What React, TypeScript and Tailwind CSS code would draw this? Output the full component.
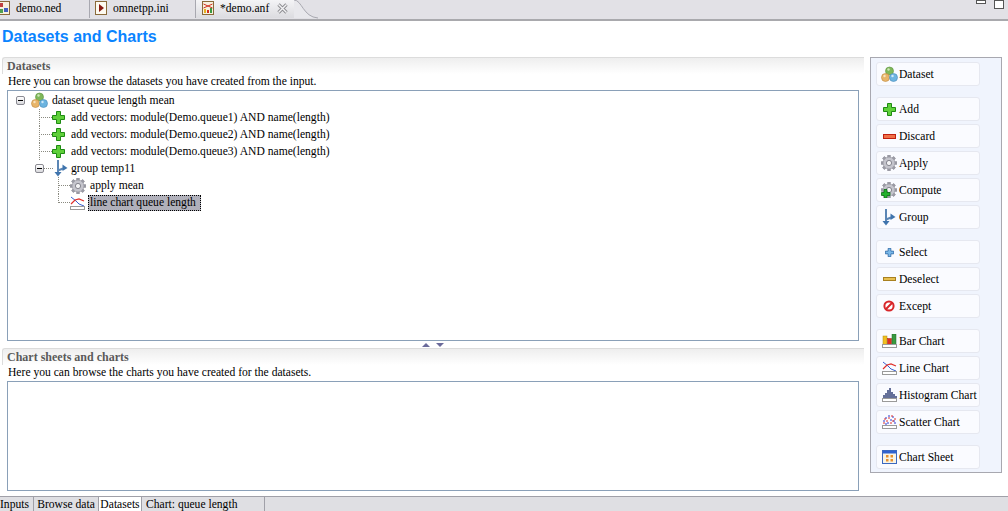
import type { ReactNode } from 'react'

function DatasetIcon() {
  return (
    <svg width="17" height="17" viewBox="0 0 17 17">
      <circle cx="8.5" cy="5" r="4" fill="#7fb85a" stroke="#5d9440" strokeWidth="0.6" />
      <circle cx="4.5" cy="11.5" r="4" fill="#e8b56a" stroke="#c08a3e" strokeWidth="0.6" />
      <circle cx="12.5" cy="11.5" r="4" fill="#6cb4e0" stroke="#4a8cb8" strokeWidth="0.6" />
      <circle cx="7.5" cy="3.5" r="1.2" fill="#cfe8b8" />
      <circle cx="11.5" cy="10" r="1.2" fill="#cfe8f8" />
      <circle cx="3.5" cy="10" r="1.2" fill="#f8e4c0" />
    </svg>
  )
}

function PlusIcon({ fill = '#5fd03a', stroke = '#1e8a12', size = 13 }: { fill?: string; stroke?: string; size?: number }) {
  return (
    <svg width={size} height={size} viewBox="0 0 13 13">
      <path d="M4.5 .5h4v4h4v4h-4v4h-4v-4h-4v-4h4z" fill={fill} stroke={stroke} />
    </svg>
  )
}

function MinusIcon({ fill, stroke, h = 5 }: { fill: string; stroke: string; h?: number }) {
  return (
    <svg width="13" height={h} viewBox={`0 0 13 ${h}`}>
      <rect x=".5" y=".5" width="12" height={h - 1} fill={fill} stroke={stroke} />
    </svg>
  )
}

function GearIcon({ plus }: { plus?: boolean }) {
  const teeth = [0, 45, 90, 135, 180, 225, 270, 315]
  return (
    <svg width="16" height="16" viewBox="0 0 16 16">
      {teeth.map((a) => (
        <rect key={a} x="6.5" y="0" width="3" height="16" fill="#9a9aa4" transform={`rotate(${a} 8 8)`} />
      ))}
      <circle cx="8" cy="8" r="6" fill="#c4c4cc" stroke="#8f8f98" strokeWidth="0.6" />
      <circle cx="8" cy="8" r="2.6" fill="#f4f4f6" stroke="#6f6f78" strokeWidth="0.8" />
      {plus && <path d="M3 7.5h3v3h3v3H6v2.500H3V13.500H.5v-3H3z" fill="#22b02c" stroke="#0c6a14" strokeWidth="0.8" />}
    </svg>
  )
}

function GroupIcon() {
  return (
    <svg width="14" height="17" viewBox="0 0 14 17">
      <path d="M4 0v13" stroke="#5b86b5" strokeWidth="2" fill="none" />
      <path d="M.5 12l3.500 4.500 3.500-4.500z" fill="#3f74ad" />
      <path d="M4 10.500l5-2" stroke="#5b86b5" strokeWidth="2" fill="none" />
      <path d="M8.500 4.500l5 3.500-5 3z" fill="#3f74ad" />
    </svg>
  )
}

function ChartBase({ children }: { children: ReactNode }) {
  return (
    <svg width="15" height="14" viewBox="0 0 15 14">
      {children}
      <rect x=".5" y="10.5" width="14" height="3" fill="#fff" stroke="#9a9a9a" />
    </svg>
  )
}

function LineChartIcon() {
  return (
    <ChartBase>
      <path d="M1 1l5 4 3 3 5 2" stroke="#3a5fd0" fill="none" />
      <path d="M1 8l4-4 4-1 5 2" stroke="#e0302a" strokeWidth="1.2" fill="none" />
    </ChartBase>
  )
}

function BarChartIcon() {
  return (
    <ChartBase>
      <rect x="1" y="2" width="4" height="8.500" fill="#f0c020" stroke="#b08a10" strokeWidth="0.5" />
      <rect x="5.500" y="4.500" width="4" height="6" fill="#e03020" stroke="#a02010" strokeWidth="0.5" />
      <rect x="10" y="0" width="4" height="10.500" fill="#3a9a40" stroke="#1e6a24" strokeWidth="0.5" />
    </ChartBase>
  )
}

function HistogramIcon() {
  return (
    <ChartBase>
      <path d="M2 11V7M4 11V5M6 11V2M8 11V0M10 11V4M12 11V6M14 11V8" stroke="#24346e" strokeWidth="1.4" />
    </ChartBase>
  )
}

function ScatterIcon() {
  return (
    <ChartBase>
      <path d="M1 6h2M3 3h2M5 8h2M6 1h2M8 5h2M10 2h2M12 8h2M3 9h2M11 6h2" stroke="#2a3ad0" />
      <path d="M2 4h2M4 6h2M6 3h2M8 8h2M9 1h2M12 4h2M1 8h2M10 6h2" stroke="#e0302a" />
    </ChartBase>
  )
}

function SheetIcon() {
  return (
    <svg width="15" height="14" viewBox="0 0 15 14">
      <rect x=".5" y=".5" width="14" height="13" fill="#f8f4e4" stroke="#3a68c0" />
      <rect x="1" y="1" width="13" height="2.500" fill="#2f62d0" />
      <path d="M4 5h2.500v2.500H4zM8.500 5H11v2.500H8.500zM4 9h2.500v2.500H4zM8.500 9H11v2.500H8.500z" fill="#e8902c" />
    </svg>
  )
}

function ExceptIcon() {
  return (
    <svg width="12" height="12" viewBox="0 0 12 12">
      <circle cx="6" cy="6" r="4.600" fill="#fff" stroke="#d8262a" strokeWidth="2" />
      <path d="M2.800 9.200l6.400-6.400" stroke="#d8262a" strokeWidth="2" />
    </svg>
  )
}

function NedIcon() {
  return (
    <svg width="12" height="14" viewBox="0 0 12 14">
      <rect x=".5" y=".5" width="11" height="13" fill="#f7f1df" stroke="#8a6a3a" />
      <rect x="1" y="2" width="4" height="4" fill="#c04040" />
      <rect x="6" y="7" width="4" height="4" fill="#4060c0" />
      <rect x="1" y="8" width="4" height="4" fill="#50a050" />
    </svg>
  )
}

function IniIcon() {
  return (
    <svg width="12" height="14" viewBox="0 0 12 14">
      <rect x=".5" y=".5" width="11" height="13" fill="#fdfaf0" stroke="#8a6a3a" />
      <path d="M4 3l5 4-5 4z" fill="#8a1a12" />
    </svg>
  )
}

function AnfIcon() {
  return (
    <svg width="12" height="14" viewBox="0 0 12 14">
      <rect x=".5" y=".5" width="11" height="13" fill="#f7f1df" stroke="#8a6a3a" />
      <rect x="2" y="8" width="2" height="4" fill="#e8b020" />
      <rect x="5" y="9" width="2" height="3" fill="#d03020" />
      <rect x="8" y="7" width="2" height="5" fill="#3a9a40" />
      <path d="M1.500 3l9 4M1.500 7l9-4" stroke="#d03020" />
    </svg>
  )
}

function CloseIcon() {
  return (
    <svg width="11" height="11" viewBox="0 0 11 11">
      <path d="M1.500 1.500l8 8M9.500 1.500l-8 8" stroke="#8c8c90" strokeWidth="3.200" />
      <path d="M1.500 1.500l8 8M9.500 1.500l-8 8" stroke="#f4f4f6" strokeWidth="1.400" />
    </svg>
  )
}

function TreeToggle() {
  return (
    <span className="flex h-[9px] w-[9px] shrink-0 items-center justify-center rounded-[2px] border border-[#8a8a92] bg-gradient-to-b from-white to-[#d8d8dc]">
      <span className="h-px w-[5px] bg-black" />
    </span>
  )
}

// one piece of dotted tree line: vertical part plus the stub going to the icon
function Elbow({ width, last }: { width: number; last?: boolean }) {
  return (
    <span className="relative h-[17px] shrink-0" style={{ width }}>
      <span className={`absolute left-0 top-0 border-l border-dotted border-[#8a8a80] ${last ? 'h-[9px]' : 'h-[17px]'}`} />
      <span className="absolute left-0 right-0 top-[8px] border-t border-dotted border-[#8a8a80]" />
    </span>
  )
}

function TreeRow({ children }: { children: ReactNode }) {
  return <div className="flex h-[17px] items-center whitespace-nowrap">{children}</div>
}

function Tree() {
  const vectors = ['queue1', 'queue2', 'queue3']
  return (
    <div className="pl-[8px] pt-[1px]">
      <TreeRow>
        <TreeToggle />
        <span className="ml-[6px] flex w-[21px] shrink-0"><DatasetIcon /></span>
        <span>dataset queue length mean</span>
      </TreeRow>
      {vectors.map((q) => (
        <TreeRow key={q}>
          <span className="w-[23px] shrink-0" />
          <Elbow width={13} />
          <span className="flex w-[19px] shrink-0"><PlusIcon /></span>
          <span>add vectors: module(Demo.{q}) AND name(length)</span>
        </TreeRow>
      ))}
      <TreeRow>
        <span className="w-[19px] shrink-0" />
        <TreeToggle />
        <span className="w-[9px] shrink-0 border-t border-dotted border-[#8a8a80]" />
        <span className="ml-[1px] flex w-[17px] shrink-0"><GroupIcon /></span>
        <span>group temp11</span>
      </TreeRow>
      <TreeRow>
        <span className="w-[42px] shrink-0" />
        <Elbow width={12} />
        <span className="flex w-[20px] shrink-0"><GearIcon /></span>
        <span>apply mean</span>
      </TreeRow>
      <TreeRow>
        <span className="w-[42px] shrink-0" />
        <Elbow width={12} last />
        <span className="flex w-[18px] shrink-0"><LineChartIcon /></span>
        <span className="border border-dotted border-black bg-[#b0b0ba] pl-px pr-[4px] leading-[14px]">line chart queue length</span>
      </TreeRow>
    </div>
  )
}

function SectionHeader({ title }: { title: string }) {
  return (
    <div className="h-[17px] rounded-tl-[3px] border-l border-t border-[#dcdcdc] bg-gradient-to-b from-[#eeeeee] to-white pl-[4px] pt-px text-[12px] font-bold leading-[15px] text-[#5a5a5a]">
      {title}
    </div>
  )
}

function ToolButton({ icon, label }: { icon: ReactNode; label: string }) {
  return (
    <div className="flex h-[24px] w-[104px] items-center whitespace-nowrap rounded-[3px] border border-[#e6e8f0] bg-[#fafbff] pl-[3px]">
      <span className="flex w-[18px] shrink-0 justify-center">{icon}</span>
      <span className="ml-px">{label}</span>
    </div>
  )
}

function Tab({ icon, label, width, active, close }: { icon: ReactNode; label: string; width: number; active?: boolean; close?: boolean }) {
  return (
    <div
      className={`flex h-[18px] shrink-0 items-center pb-[2px] ${active ? 'bg-gradient-to-b from-[#f4f4f6] to-[#dcdce0] pl-[1px]' : 'border-r border-[#a8a8b0]'}`}
      style={{ width }}
    >
      <span className={`ml-[5px] flex shrink-0 ${active ? 'w-[18px]' : 'w-[18px]'}`}>{icon}</span>
      <span>{label}</span>
      {close && <span className="ml-[8px] flex"><CloseIcon /></span>}
    </div>
  )
}

export default function App() {
  return (
    <div className="flex h-[511px] w-[1008px] flex-col overflow-hidden bg-white font-['Liberation_Serif',serif] text-[11.6px] leading-[15px] text-black">
      {/* editor tabs */}
      <div className="flex h-[21px] shrink-0 items-start border-b-2 border-[#a9a9ad] bg-[#e2e1e6]">
        <div className="-ml-[7px] flex">
          <Tab icon={<NedIcon />} label="demo.ned" width={97} />
          <Tab icon={<IniIcon />} label="omnetpp.ini" width={106} />
          <Tab icon={<AnfIcon />} label="*demo.anf" width={99} active close />
        </div>
        <svg width="26" height="19" viewBox="0 0 26 19" className="-ml-px shrink-0">
          <path d="M0 0c8 0 9 17 24 18H0z" stroke="none" fill="#e8e8ec" />
          <path d="M0 0c8 0 9 17 24 18" stroke="#a8a8b0" fill="none" />
        </svg>
        <div className="ml-auto mr-[4px] flex items-start gap-[8px]">
          <span className="h-[4px] w-[10px] border border-[#555] bg-white" />
          <span className="h-[9px] w-[10px] border border-[#555] bg-white" />
        </div>
      </div>

      <div className="flex min-h-0 flex-1">
        <div className="flex w-[870px] shrink-0 flex-col">
          <h1 className="pl-[2px] pt-[7px] font-['Liberation_Sans',sans-serif] text-[16px] font-bold leading-[18px] text-[#0a84ff]">
            Datasets and Charts
          </h1>
          <div className="ml-[2px] mr-[6px] mt-[11px] flex flex-1 flex-col">
            <SectionHeader title="Datasets" />
            <p className="mb-px pl-[6px] pt-px leading-[14px]">Here you can browse the datasets you have created from the input.</p>
            <div className="ml-[5px] mr-[5px] h-[251px] border border-[#8aa0b8]">
              <Tree />
            </div>
            <div className="flex h-[7px] items-center justify-center gap-[6px]">
              <span className="border-x-[4px] border-b-[4px] border-x-transparent border-b-[#6a6a9a]" />
              <span className="border-x-[4px] border-t-[4px] border-x-transparent border-t-[#6a6a9a]" />
            </div>
            <SectionHeader title="Chart sheets and charts" />
            <p className="mb-px pl-[6px] pt-px leading-[14px]">Here you can browse the charts you have created for the datasets.</p>
            <div className="ml-[5px] mr-[5px] h-[110px] border border-[#8aa0b8]" />
          </div>
        </div>

        {/* tool palette */}
        <div className="mt-[36px] h-[416px] w-[132px] shrink-0 border border-[#a8a8b0] bg-[#f0f4fd] pl-[5px] pt-[4px]">
          <div className="flex flex-col gap-[3px]">
            <ToolButton icon={<DatasetIcon />} label="Dataset" />
            <div className="h-[5px]" />
            <ToolButton icon={<PlusIcon />} label="Add" />
            <ToolButton icon={<MinusIcon fill="#f07048" stroke="#c02010" />} label="Discard" />
            <ToolButton icon={<GearIcon />} label="Apply" />
            <ToolButton icon={<GearIcon plus />} label="Compute" />
            <ToolButton icon={<GroupIcon />} label="Group" />
            <div className="h-[5px]" />
            <ToolButton icon={<PlusIcon fill="#7ab8e8" stroke="#1e5a9a" size={9} />} label="Select" />
            <ToolButton icon={<MinusIcon fill="#e8c050" stroke="#a88020" h={4} />} label="Deselect" />
            <ToolButton icon={<ExceptIcon />} label="Except" />
            <div className="h-[5px]" />
            <ToolButton icon={<BarChartIcon />} label="Bar Chart" />
            <ToolButton icon={<LineChartIcon />} label="Line Chart" />
            <ToolButton icon={<HistogramIcon />} label="Histogram Chart" />
            <ToolButton icon={<ScatterIcon />} label="Scatter Chart" />
            <div className="h-[5px]" />
            <ToolButton icon={<SheetIcon />} label="Chart Sheet" />
          </div>
        </div>
      </div>

      {/* page tabs */}
      <div className="flex h-[15px] shrink-0 items-stretch border-t border-[#a0a0a8] bg-[#dfdfe3] leading-[15px]">
        <span className="w-[34px] border-r border-[#a0a0a8]">Inputs</span>
        <span className="w-[65px] border-r border-[#a0a0a8] text-center">Browse data</span>
        <span className="w-[43px] border-r border-[#a0a0a8] bg-white text-center">Datasets</span>
        <span className="w-[123px] border-r border-[#a0a0a8] pl-[4px]">Chart: queue length</span>
      </div>
    </div>
  )
}
